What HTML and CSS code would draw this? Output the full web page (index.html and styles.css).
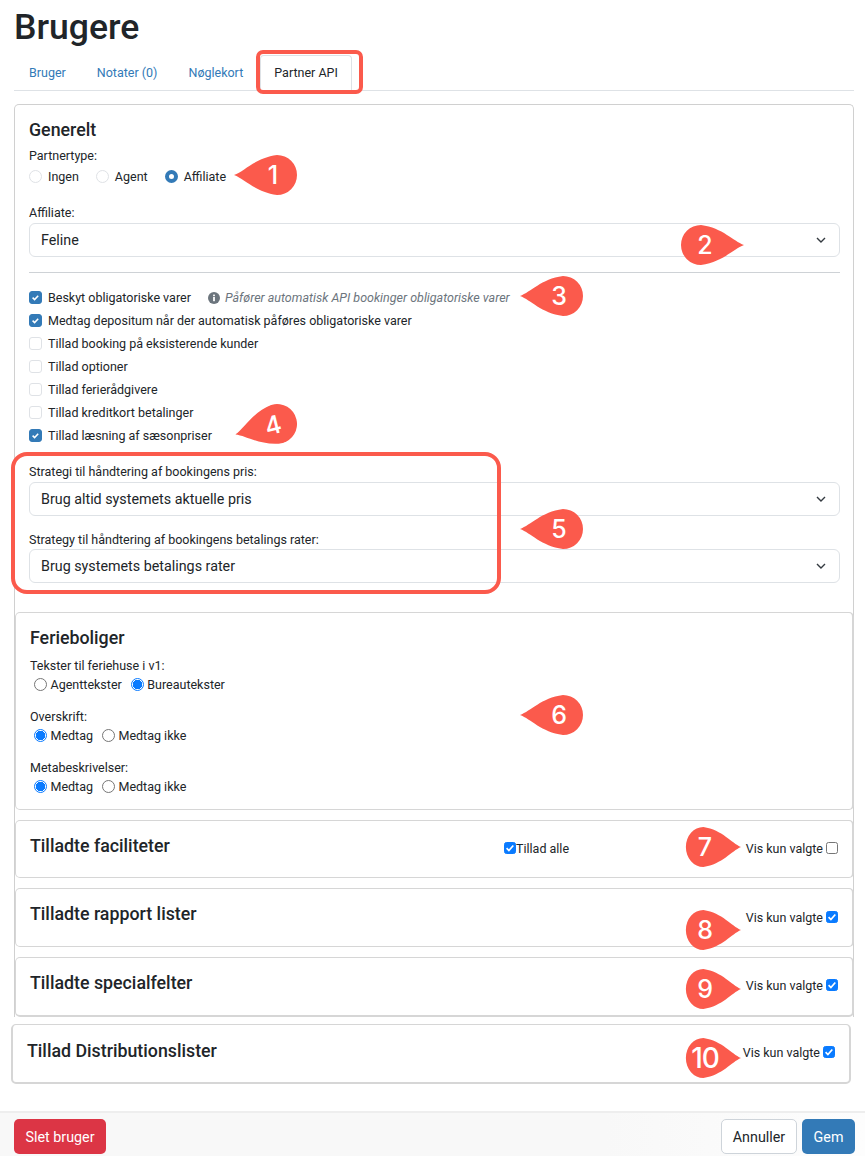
FILE: index.html
```html
<!DOCTYPE html>
<html lang="da">
<head>
<meta charset="utf-8">
<title>Brugere</title>
<link rel="stylesheet" href="styles.css">
</head>
<body>
<div class="page">
  <main class="content">
    <h1 class="page-title">Brugere</h1>
    <nav class="tabs">
      <a class="tab tab-first">Bruger</a>
      <a class="tab tab-wide">Notater (0)</a>
      <a class="tab">Nøglekort</a>
      <a class="tab tab-active">Partner API</a>
    </nav>

    <section class="panel">
      <div class="panel-body">
        <h3 class="section-title">Generelt</h3>
        <div class="field-label label-partner">Partnertype:</div>
        <div class="radio-row">
          <label class="radio-item"><input type="radio" class="fancy-radio" name="ptype">Ingen</label>
          <label class="radio-item"><input type="radio" class="fancy-radio" name="ptype">Agent</label>
          <label class="radio-item"><input type="radio" class="fancy-radio" name="ptype" checked>Affiliate</label>
        </div>
        <div class="field-label label-affiliate">Affiliate:</div>
        <div class="select"><span>Feline</span><svg class="chevron" viewBox="0 0 10 6"><path d="M1 1l4 4 4-4"/></svg></div>
        <hr class="divider">
        <div class="checks">
          <label class="check-row"><input type="checkbox" class="fancy-check" checked><span>Beskyt obligatoriske varer</span><span class="hint"><svg class="info" viewBox="0 0 12 12"><circle cx="6" cy="6" r="6"/><rect class="info-i" x="5.1" y="5" width="1.8" height="4.2"/><rect class="info-i" x="5.1" y="2.6" width="1.8" height="1.6"/></svg><em>Påfører automatisk API bookinger obligatoriske varer</em></span></label>
          <label class="check-row"><input type="checkbox" class="fancy-check" checked>Medtag depositum når der automatisk påføres obligatoriske varer</label>
          <label class="check-row"><input type="checkbox" class="fancy-check">Tillad booking på eksisterende kunder</label>
          <label class="check-row"><input type="checkbox" class="fancy-check">Tillad optioner</label>
          <label class="check-row"><input type="checkbox" class="fancy-check">Tillad ferierådgivere</label>
          <label class="check-row"><input type="checkbox" class="fancy-check">Tillad kreditkort betalinger</label>
          <label class="check-row"><input type="checkbox" class="fancy-check" checked>Tillad læsning af sæsonpriser</label>
        </div>
        <div class="field-label label-strategy">Strategi til håndtering af bookingens pris:</div>
        <div class="select select-tight"><span>Brug altid systemets aktuelle pris</span><svg class="chevron" viewBox="0 0 10 6"><path d="M1 1l4 4 4-4"/></svg></div>
        <div class="field-label label-rates">Strategy til håndtering af bookingens betalings rater:</div>
        <div class="select select-rates"><span>Brug systemets betalings rater</span><svg class="chevron" viewBox="0 0 10 6"><path d="M1 1l4 4 4-4"/></svg></div>

        <section class="subcard subcard-ferie">
          <h3 class="section-title">Ferieboliger</h3>
          <div class="field-label label-texts">Tekster til feriehuse i v1:</div>
          <div class="native-row">
            <label class="native-item"><input type="radio" class="plain-radio" name="t1">Agenttekster</label>
            <label class="native-item"><input type="radio" class="plain-radio" name="t1" checked>Bureautekster</label>
          </div>
          <div class="field-label label-next">Overskrift:</div>
          <div class="native-row">
            <label class="native-item"><input type="radio" class="plain-radio" name="t2" checked>Medtag</label>
            <label class="native-item"><input type="radio" class="plain-radio" name="t2">Medtag ikke</label>
          </div>
          <div class="field-label label-next">Metabeskrivelser:</div>
          <div class="native-row">
            <label class="native-item"><input type="radio" class="plain-radio" name="t3" checked>Medtag</label>
            <label class="native-item"><input type="radio" class="plain-radio" name="t3">Medtag ikke</label>
          </div>
        </section>

        <section class="subcard list-card list-facil">
          <h3 class="list-title">Tilladte faciliteter</h3>
          <label class="allow-all"><input type="checkbox" class="plain-check" checked>Tillad alle</label>
          <label class="only-selected"><span>Vis kun valgte</span><input type="checkbox" class="plain-check"></label>
        </section>
        <section class="subcard list-card list-rapport">
          <h3 class="list-title">Tilladte rapport lister</h3>
          <span></span>
          <label class="only-selected"><span>Vis kun valgte</span><input type="checkbox" class="plain-check" checked></label>
        </section>
        <section class="subcard list-card list-special">
          <h3 class="list-title">Tilladte specialfelter</h3>
          <span></span>
          <label class="only-selected"><span>Vis kun valgte</span><input type="checkbox" class="plain-check" checked></label>
        </section>
      </div>
    </section>

    <section class="subcard list-card list-distribution">
      <h3 class="list-title">Tillad Distributionslister</h3>
      <span></span>
      <label class="only-selected"><span>Vis kun valgte</span><input type="checkbox" class="plain-check" checked></label>
    </section>
  </main>

  <footer class="footer">
    <button class="btn btn-danger">Slet bruger</button>
    <div class="footer-right">
      <button class="btn btn-light">Annuller</button>
      <button class="btn btn-primary">Gem</button>
    </div>
  </footer>

  <div class="mark mark-tab"></div>
  <div class="mark mark-strategy"></div>

  <div class="pin pin-1"><svg viewBox="0 0 64 40" preserveAspectRatio="none"><path d="M0 20C11 16 21 3 43 0a20 20 0 0 1 0 40C21 37 11 24 0 20Z"/></svg><span>1</span></div>
  <div class="pin pin-2 pin-right"><svg viewBox="0 0 64 40" preserveAspectRatio="none"><path d="M0 20C11 16 21 3 43 0a20 20 0 0 1 0 40C21 37 11 24 0 20Z"/></svg><span>2</span></div>
  <div class="pin pin-3"><svg viewBox="0 0 64 40" preserveAspectRatio="none"><path d="M0 20C11 16 21 3 43 0a20 20 0 0 1 0 40C21 37 11 24 0 20Z"/></svg><span>3</span></div>
  <div class="pin pin-4"><svg viewBox="0 0 64 40" preserveAspectRatio="none"><path d="M0 20C11 16 21 3 43 0a20 20 0 0 1 0 40C21 37 11 24 0 20Z"/></svg><span>4</span></div>
  <div class="pin pin-5"><svg viewBox="0 0 64 40" preserveAspectRatio="none"><path d="M0 20C11 16 21 3 43 0a20 20 0 0 1 0 40C21 37 11 24 0 20Z"/></svg><span>5</span></div>
  <div class="pin pin-6"><svg viewBox="0 0 64 40" preserveAspectRatio="none"><path d="M0 20C11 16 21 3 43 0a20 20 0 0 1 0 40C21 37 11 24 0 20Z"/></svg><span>6</span></div>
  <div class="pin pin-7 pin-right pin-short"><svg viewBox="0 0 64 40" preserveAspectRatio="none"><path d="M0 20C11 16 21 3 43 0a20 20 0 0 1 0 40C21 37 11 24 0 20Z"/></svg><span>7</span></div>
  <div class="pin pin-8 pin-right pin-short"><svg viewBox="0 0 64 40" preserveAspectRatio="none"><path d="M0 20C11 16 21 3 43 0a20 20 0 0 1 0 40C21 37 11 24 0 20Z"/></svg><span>8</span></div>
  <div class="pin pin-9 pin-right pin-short"><svg viewBox="0 0 64 40" preserveAspectRatio="none"><path d="M0 20C11 16 21 3 43 0a20 20 0 0 1 0 40C21 37 11 24 0 20Z"/></svg><span>9</span></div>
  <div class="pin pin-10 pin-right pin-short"><svg viewBox="0 0 64 40" preserveAspectRatio="none"><path d="M0 20C11 16 21 3 43 0a20 20 0 0 1 0 40C21 37 11 24 0 20Z"/></svg><span>10</span></div>
</div>
</body>
</html>
```
FILE: styles.css
```css
* { box-sizing: border-box; }
html, body { margin: 0; padding: 0; background: #fff; }
body { font-family: Roboto, "Liberation Sans", sans-serif; font-size: 12.5px; color: #212529; }

.page { position: relative; width: 865px; height: 1156px; overflow: hidden; display: flex; flex-direction: column; }
.content { flex: 1; padding: 0 11px 0 14px; }

.page-title { margin: 0; font-size: 35.6px; font-weight: 500; line-height: 54px; }

.tabs { display: flex; height: 37px; border-bottom: 1px solid #dee2e6; }
.tab { color: #337ab7; padding: 0 14px; line-height: 36px; border: 1px solid transparent; border-bottom: 0; }
.tab-first { padding-right: 15px; }
.tab-wide { padding-right: 15px; }
.tab-active { color: #212529; background: #fff; border-color: #dee2e6; border-radius: 4px 4px 0 0; width: 92px; height: 36px; margin-top: 1px; margin-left: 2px; padding: 0 0 0 13px; line-height: 34px; }

.panel { margin-top: 13px; height: 913px; border: 1px solid #d0d0d0; border-bottom: 0; border-radius: 5px 5px 0 0; }
.panel-body { padding: 15px 0 0 14px; }

.section-title { margin: 0; font-size: 17.8px; font-weight: 500; line-height: 20px; }

.field-label { line-height: 16px; }
.label-partner { margin-top: 8px; }
.label-affiliate { margin-top: 21px; }
.label-strategy { margin-top: 17px; }
.label-rates { margin-top: 16px; }
.label-texts { margin-top: 10px; }
.label-next { margin-top: 17px; }

.radio-row { display: flex; margin-top: 4px; height: 16px; align-items: center; }
.radio-item { display: flex; align-items: center; margin-right: 17px; }
.fancy-radio { appearance: none; width: 13px; height: 13px; margin: 0 6px 0 0; border: 1px solid #dfe2e6; border-radius: 50%; background: #fff; }
.fancy-radio:checked { border: 4px solid #337ab7; }

.select { display: flex; align-items: center; justify-content: space-between; width: 811px; height: 34px; margin-top: 2px; padding: 0 13px 0 11px; border: 1px solid #dee2e6; border-radius: 6px; font-size: 14.3px; background: #fff; }
.select-tight { margin-top: 2px; }
.select-rates { margin-top: 1px; }
.chevron { width: 10px; height: 6px; fill: none; stroke: #343a40; stroke-width: 1.4; }

.divider { width: 811px; margin: 15px 0 0; border: 0; border-top: 1px solid #ced2d6; }

.checks { margin-top: 13px; }
.check-row { display: flex; align-items: center; height: 23px; white-space: nowrap; }
.fancy-check { appearance: none; flex: none; width: 13px; height: 13px; margin: 0 6px 0 0; border: 1px solid #dfe2e6; border-radius: 3px; background: #fff; }
.fancy-check:checked { border-color: #337ab7; background: #337ab7 url("data:image/svg+xml,%3Csvg xmlns='http://www.w3.org/2000/svg' viewBox='0 0 13 13'%3E%3Cpath d='M3.6 6.6l2 2 3.6-3.8' fill='none' stroke='%23fff' stroke-width='1.5'/%3E%3C/svg%3E") center / 13px 13px no-repeat; }
.hint { display: inline-flex; align-items: center; margin-left: 17px; color: #6c757d; }
.hint em { font-style: italic; }
.info { width: 12px; height: 12px; margin-right: 5px; fill: #6c757d; }
.info-i { fill: #fff; }

.subcard { background: #fff; border: 1px solid #d6d6d6; border-radius: 5px; }
.subcard-ferie { width: 839px; height: 198px; margin: 29px 0 0 -14px; padding: 15px 14px 0; border-right-width: 2px; }

.native-row { display: flex; height: 16px; margin-top: 2px; padding-left: 4px; align-items: center; }
.native-item { display: flex; align-items: center; margin-right: 9px; }
.plain-radio { appearance: none; width: 13px; height: 13px; margin: 0 3.5px 0 0; border: 1px solid #767676; border-radius: 50%; background: #fff; }
.plain-radio:checked { border: 1px solid #0a7bff; background: radial-gradient(circle, #0a7bff 0 4.6px, #fff 5px); }

.list-card { display: grid; grid-template-columns: 474px 1fr auto; padding: 14px 14px 0; align-items: start; }
.list-facil { width: 839px; height: 58px; margin: 10px 0 0 -14px; border-right-width: 2px; }
.list-rapport { width: 839px; height: 59px; margin: 10px 0 0 -14px; border-right-width: 2px; }
.list-special { width: 839px; height: 60px; margin: 10px 0 0 -14px; border-right-width: 2px; border-bottom-width: 2px; }
.list-distribution { width: 840px; height: 60px; margin: 7px 0 0 -3px; padding-top: 15px; border-left-width: 2px; border-right-width: 2px; border-bottom-width: 2px; }

.list-title { margin: 0; font-size: 17.8px; font-weight: 500; line-height: 22px; white-space: nowrap; }
.allow-all { display: flex; align-items: center; height: 16px; margin-top: 5px; }
.only-selected { display: flex; align-items: center; gap: 3px; height: 16px; margin-top: 5px; white-space: nowrap; }
.list-rapport .only-selected { margin-top: 6px; }
.list-distribution .only-selected { margin-top: 4px; }
.plain-check { appearance: none; flex: none; width: 12px; height: 12px; margin: 0; border: 1px solid #767676; border-radius: 2.5px; background: #fff; }
.plain-check:checked { border-color: #0a7bff; background: #0a7bff url("data:image/svg+xml,%3Csvg xmlns='http://www.w3.org/2000/svg' viewBox='0 0 12 12'%3E%3Cpath d='M2.6 6.2l2.3 2.3 4.4-5' fill='none' stroke='%23fff' stroke-width='1.7'/%3E%3C/svg%3E") center / 12px 12px no-repeat; }

.footer { display: flex; justify-content: space-between; height: 45px; padding: 6px 10px 0 14px; background: linear-gradient(90deg, #f8f8f8 70%, #fdfdfd 100%); border-top: 2px solid #eeeeee; }
.footer-right { display: flex; gap: 5px; }
.btn { height: 35px; border: 1px solid transparent; border-radius: 5px; font: 14.3px Roboto, "Liberation Sans", sans-serif; padding: 0; }
.btn-danger { width: 92px; background: #dc3545; color: #fff; }
.btn-light { width: 76px; background: #fff; border-color: #ced4da; color: #212529; }
.btn-primary { width: 53px; background: #337ab7; color: #fff; }

.mark { position: absolute; border: 4px solid #fb5a4c; }
.mark-tab { left: 256px; top: 50px; width: 107px; height: 44px; border-radius: 7px; }
.mark-strategy { left: 11px; top: 452px; width: 490px; height: 142px; border-radius: 16px; }

.pin { position: absolute; width: 64px; height: 40px; }
.pin svg { display: block; width: 64px; height: 40px; fill: #fb5a4c; }
.pin span { position: absolute; left: 19px; top: 0; width: 40px; text-align: center; color: #fff; font: 500 25px/40px Inter, "Liberation Sans", sans-serif; }
.pin-right svg { transform: rotate(180deg); }
.pin-right span { left: 5px; }
.pin-short { width: 56px; }
.pin-short svg { width: 56px; }
.pin-short span { left: 0; }
.pin-1 { left: 234px; top: 155px; }
.pin-2 { left: 680px; top: 225px; }
.pin-3 { left: 520px; top: 276px; }
.pin-4 { left: 234px; top: 404px; transform: rotate(-14deg); transform-origin: 43px 20px; }
.pin-5 { left: 520px; top: 509px; }
.pin-6 { left: 520px; top: 695px; }
.pin-7 { left: 685px; top: 827px; }
.pin-8 { left: 685px; top: 910px; }
.pin-9 { left: 685px; top: 969px; }
.pin-10 { left: 685px; top: 1038px; }
.pin-10 span { font-size: 28px; letter-spacing: -1px; }
```
